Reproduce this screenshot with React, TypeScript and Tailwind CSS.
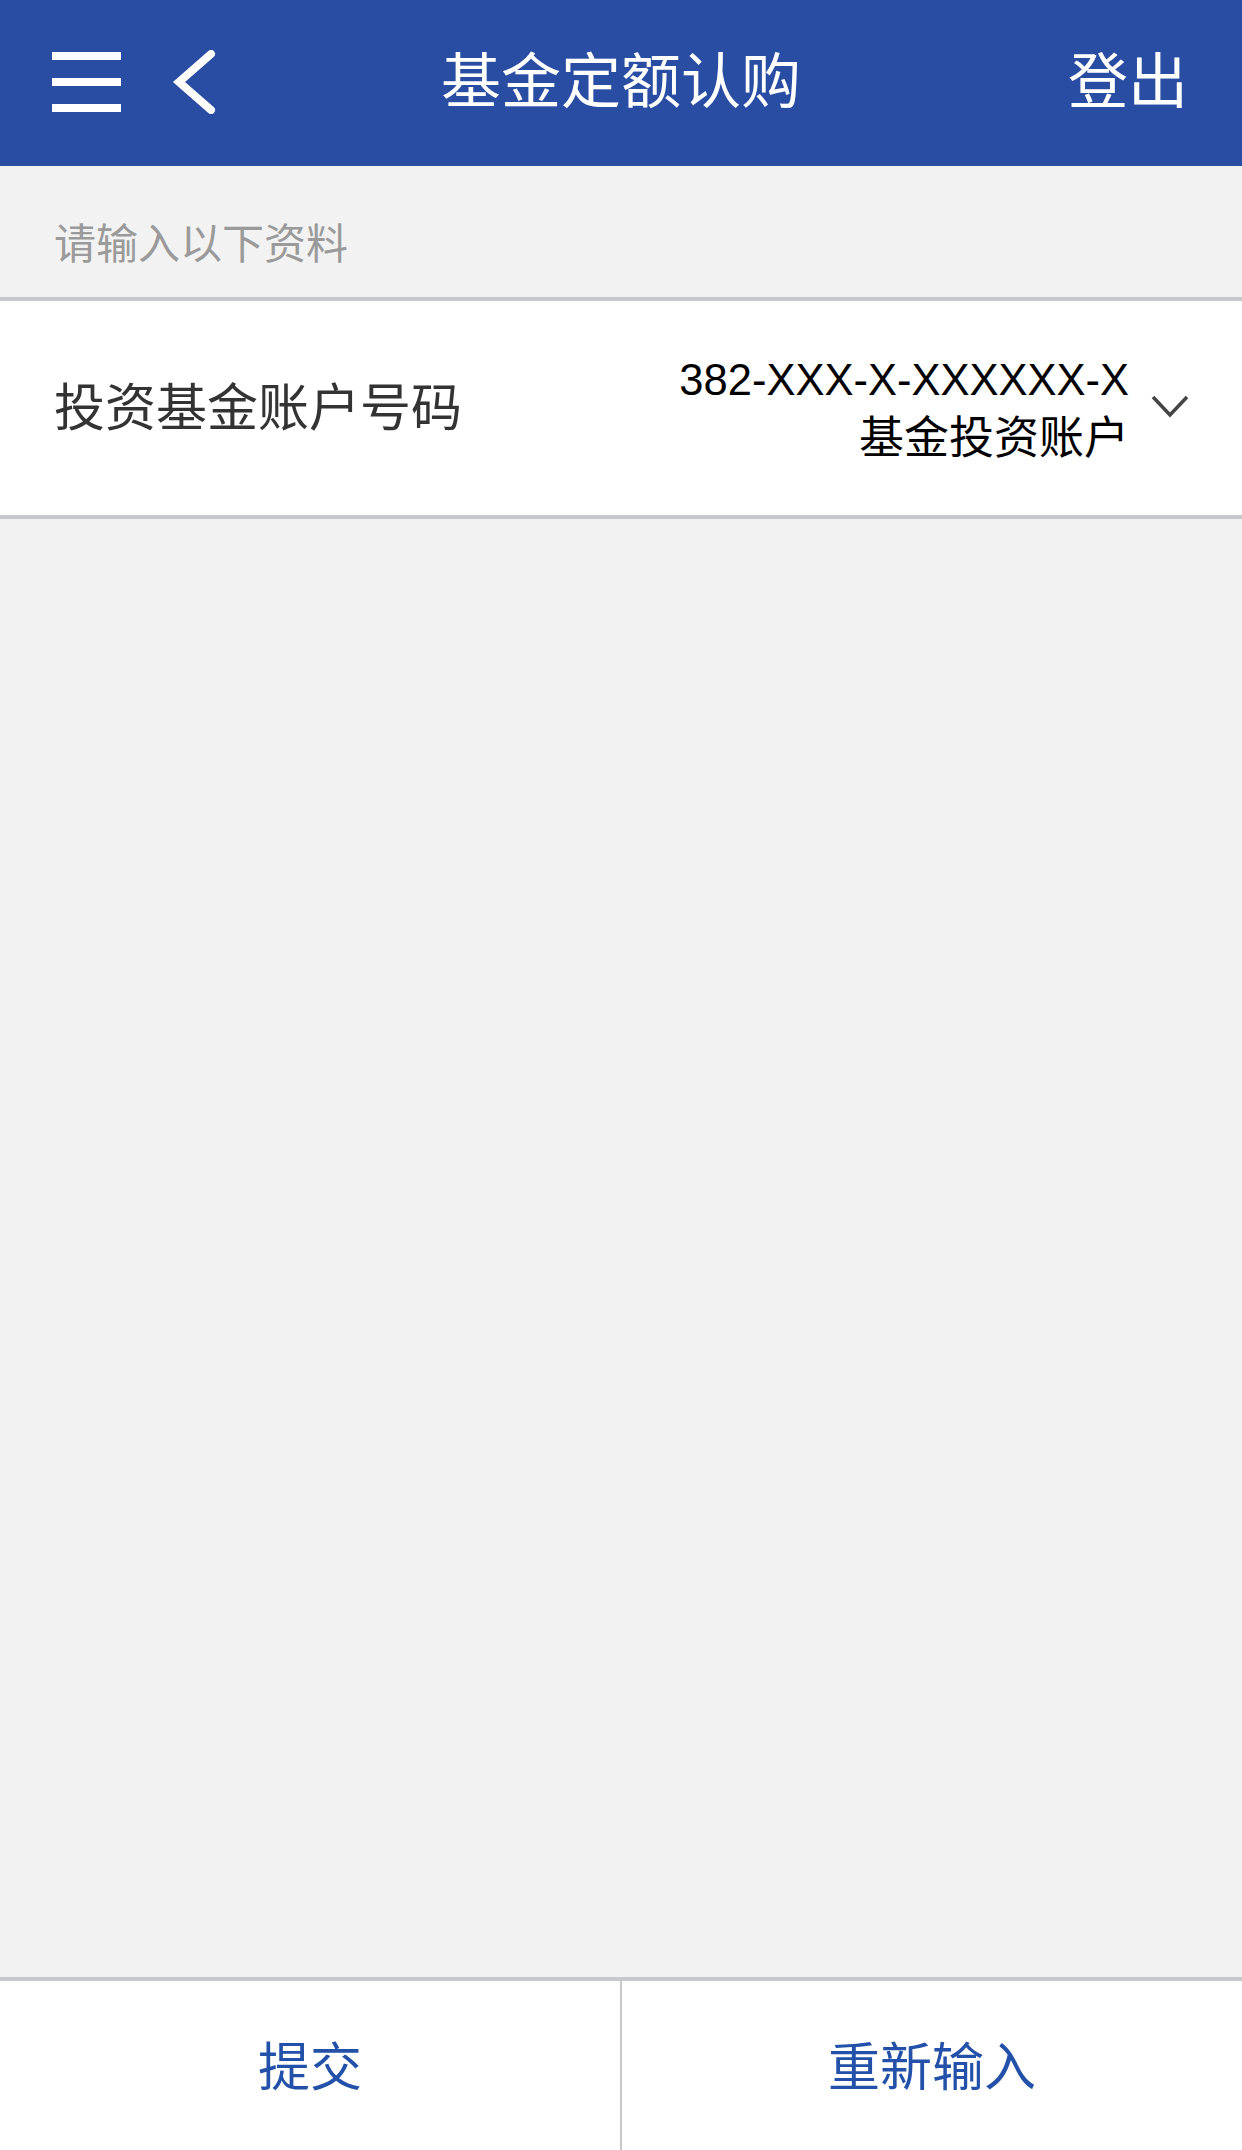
import React from "react";

const cjk = "font-['PingFang_SC','Noto_Sans_CJK_SC',sans-serif]";

const App = () => {
  return (
    <div className={`w-[1242px] h-[2150px] flex flex-col bg-[#f2f2f2] ${cjk}`}>
      {/* header */}
      <div className="h-[166px] bg-[#294da3] flex items-center px-[52px] relative shrink-0">
        <div className="flex flex-col justify-between w-[69px] h-[60px] -mt-[2px]">
          <div className="h-[8px] bg-white"></div>
          <div className="h-[8px] bg-white"></div>
          <div className="h-[8px] bg-white"></div>
        </div>
        <svg width="48" height="64" viewBox="0 0 48 64" className="ml-[49px] -mt-[2px]">
          <path d="M41 4 L9 32 L41 60" fill="none" stroke="white" strokeWidth="8" strokeLinecap="round" strokeLinejoin="miter" />
        </svg>
        <div className="absolute left-0 right-0 top-0 h-[166px] flex items-center justify-center pointer-events-none">
          <span className="text-white text-[60px] leading-none -mt-[12px]">基金定额认购</span>
        </div>
        <span className="ml-auto text-white text-[60px] leading-none -mt-[12px] mr-[2px]">登出</span>
      </div>

      {/* section title */}
      <div className="h-[135px] flex items-center px-[54px] border-b-[4px] border-[#c8c9cd] shrink-0">
        <span className="text-[42px] text-[#9a9a9a] leading-none mt-[18px]">请输入以下资料</span>
      </div>

      {/* account row */}
      <div className="h-[218px] bg-white flex items-center pl-[54px] pr-[52px] border-b-[4px] border-[#c8c9cd] shrink-0">
        <span className="text-[51px] text-[#333333] leading-none -mt-[8px]">投资基金账户号码</span>
        <div className="ml-auto flex items-center">
          <div className="flex flex-col items-end">
            <span className="font-['Liberation_Sans',sans-serif] text-[43.5px] text-black leading-none">
              382-XXX-X-XXXXXX-X
            </span>
            <span className="text-[45px] text-black leading-none mt-[10px]">基金投资账户</span>
          </div>
          <svg width="40" height="28" viewBox="0 0 40 28" className="ml-[21px] -mt-[2px]">
            <path d="M3 4 L20 22 L37 4" fill="none" stroke="#444444" strokeWidth="3.5" />
          </svg>
        </div>
      </div>

      <div className="flex-1"></div>

      {/* footer buttons */}
      <div className="h-[173px] bg-white border-t-[4px] border-[#c8c9cd] flex shrink-0">
        <button className="flex-1 flex items-center justify-center border-r-[2px] border-[#c8c8c8]">
          <span className="text-[52px] text-[#2350a8] leading-none -mt-[4px]">提交</span>
        </button>
        <button className="flex-1 flex items-center justify-center">
          <span className="text-[52px] text-[#2350a8] leading-none -mt-[4px]">重新输入</span>
        </button>
      </div>
    </div>
  );
};

export default App;
